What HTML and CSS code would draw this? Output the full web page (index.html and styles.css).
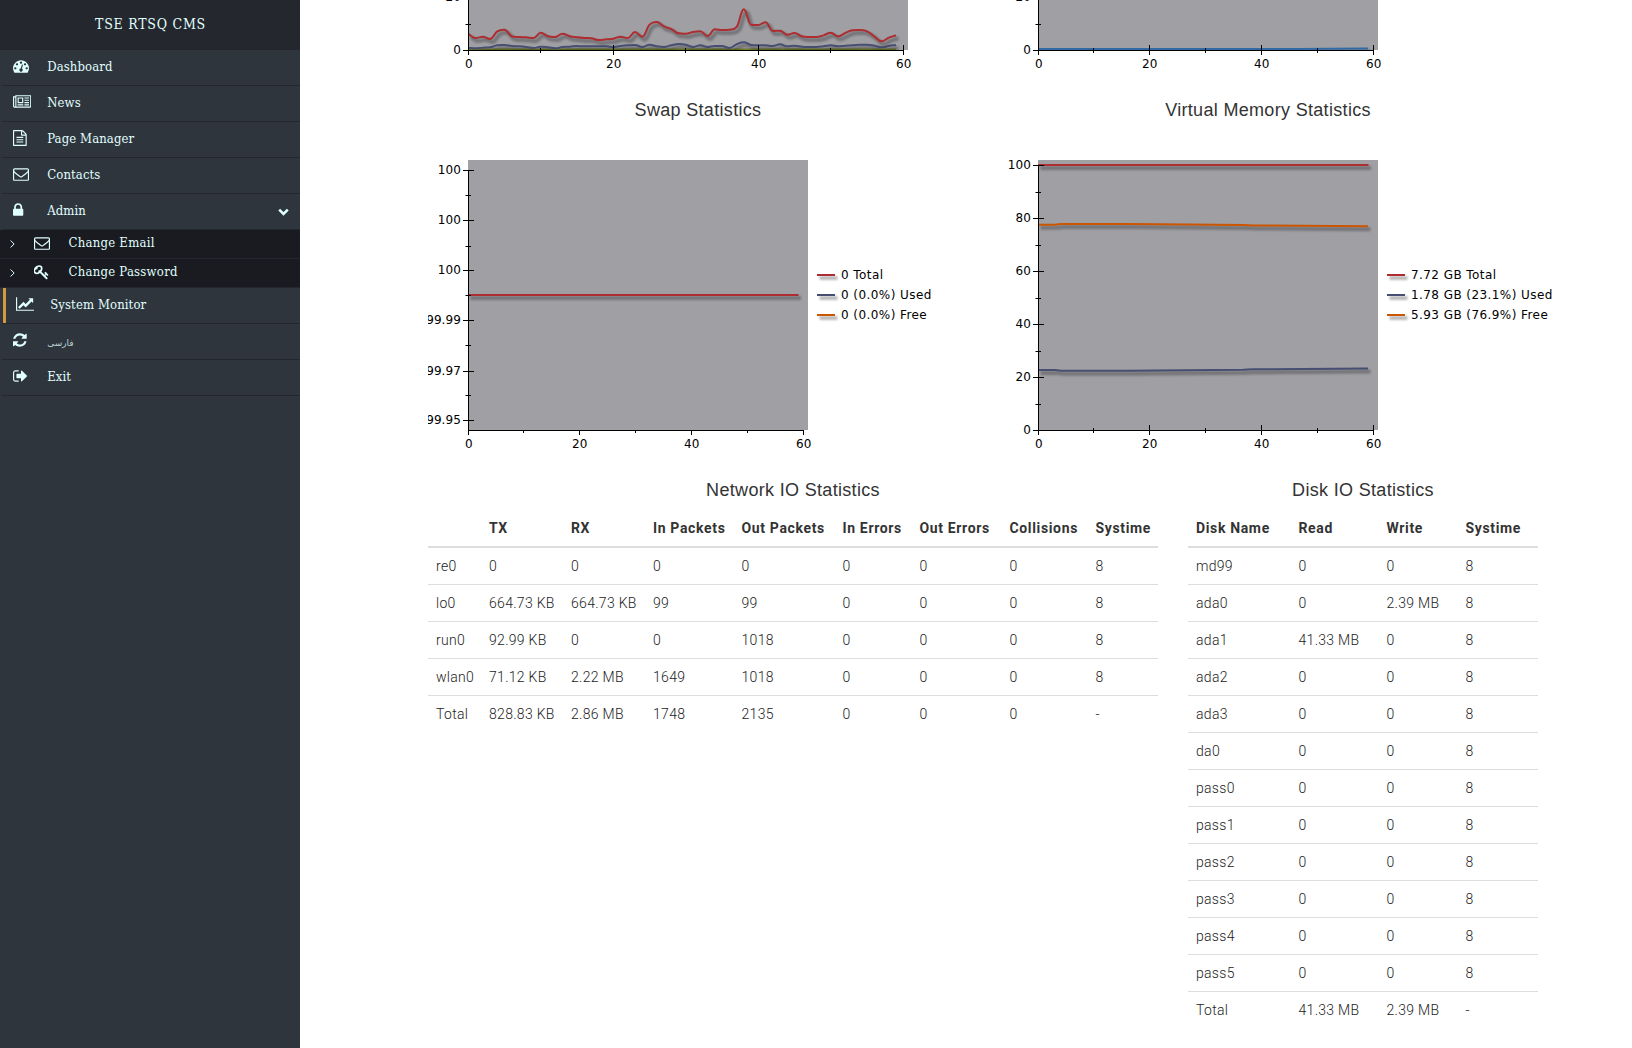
FILE: index.html
```html
<!DOCTYPE html>
<html lang="en">
<head>
<meta charset="utf-8">
<title>TSE RTSQ CMS</title>
<link rel="stylesheet" href="styles.css">
</head>
<body>
<div class="layout">
  <nav class="sidebar">
    <div class="brand">TSE RTSQ CMS</div>
    <ul class="menu">
      <li><a class="item"><svg class="icon" viewBox="0 0 1792 1792"><path d="M384 1152q0-53-37.500-90.500t-90.500-37.500-90.500 37.500-37.500 90.500 37.500 90.500 90.500 37.500 90.500-37.500 37.500-90.500zm192-448q0-53-37.500-90.500t-90.500-37.500-90.500 37.500-37.500 90.500 37.500 90.500 90.500 37.500 90.500-37.500 37.500-90.500zm428 481l101-382q6-26-7.500-48.500t-38.500-29.500-48 6.500-30 39.500l-101 382q-60 5-107 43.500t-63 98.500q-20 77 20 146t117 89 146-20 89-117q16-60-6-117t-72-91zm660-33q0-53-37.500-90.500t-90.500-37.500-90.500 37.500-37.500 90.500 37.500 90.500 90.500 37.500 90.500-37.500 37.500-90.500zm-640-640q0-53-37.500-90.500t-90.500-37.500-90.500 37.500-37.500 90.500 37.500 90.500 90.500 37.500 90.500-37.500 37.500-90.500zm448 192q0-53-37.500-90.500t-90.500-37.500-90.500 37.500-37.500 90.500 37.500 90.500 90.500 37.500 90.500-37.500 37.500-90.500zm320 448q0 261-141 483-19 29-54 29h-1402q-35 0-54-29-141-221-141-483 0-182 71-348t191-286 286-191 348-71 348 71 286 191 191 286 71 348z"/></svg><span>Dashboard</span></a></li>
      <li><a class="item"><svg class="icon wide" viewBox="0 0 2048 1792"><path d="M1024 512h-384v384h384v-384zm128 640v128h-640v-128h640zm0-768v640h-640v-640h640zm640 768v128h-512v-128h512zm0-256v128h-512v-128h512zm0-256v128h-512v-128h512zm0-256v128h-512v-128h512zm-1536 960v-960h-128v960q0 26 19 45t45 19 45-19 19-45zm1664 0v-1088h-1536v1088q0 33-11 64h1483q26 0 45-19t19-45zm128-1216v1216q0 80-56 136t-136 56h-1664q-80 0-136-56t-56-136v-1088h256v-128h1792z"/></svg><span>News</span></a></li>
      <li><a class="item"><svg class="icon" viewBox="128 0 1792 1792"><path d="M1596 380q28 28 48 76t20 88v1152q0 40-28 68t-68 28h-1344q-40 0-68-28t-28-68v-1600q0-40 28-68t68-28h896q40 0 88 20t76 48zm-444-244v376h376q-10-29-22-41l-313-313q-12-12-41-22zm384 1528v-1024h-416q-40 0-68-28t-28-68v-416h-768v1536h1280zm-1024-864q0-14 9-23t23-9h704q14 0 23 9t9 23v64q0 14-9 23t-23 9h-704q-14 0-23-9t-9-23v-64zm736 224q14 0 23 9t9 23v64q0 14-9 23t-23 9h-704q-14 0-23-9t-9-23v-64q0-14 9-23t23-9h704zm0 256q14 0 23 9t9 23v64q0 14-9 23t-23 9h-704q-14 0-23-9t-9-23v-64q0-14 9-23t23-9h704z"/></svg><span>Page Manager</span></a></li>
      <li><a class="item"><svg class="icon" viewBox="0 0 1792 1792"><path id="envelope" d="M1664 1504v-768q-32 36-69 66-268 206-426 338-51 43-83 67t-86.500 48.500-102.500 24.500h-2q-48 0-102.500-24.500t-86.500-48.500-83-67q-158-132-426-338-37-30-69-66v768q0 13 9.500 22.500t22.500 9.500h1472q13 0 22.500-9.500t9.500-22.500zm0-1051v-24.500l-.5-13-3-12.500-5.500-9-9-7.500-14-2.500h-1472q-13 0-22.500 9.500t-9.500 22.500q0 168 147 284 193 152 401 317 6 5 35 29.500t46 37.500 44.500 31.500 50.500 27.500 43 9h2q20 0 43-9t50.500-27.500 44.500-31.500 46-37.500 35-29.500q208-165 401-317 54-43 100.500-115.500t46.500-131.500zm128-37v1088q0 66-47 113t-113 47h-1472q-66 0-113-47t-47-113v-1088q0-66 47-113t113-47h1472q66 0 113 47t47 113z"/></svg><span>Contacts</span></a></li>
      <li><a class="item"><svg class="icon" viewBox="320 0 1792 1792"><path d="M640 768h512v-192q0-106-75-181t-181-75-181 75-75 181v192zm832 96v576q0 40-28 68t-68 28h-960q-40 0-68-28t-28-68v-576q0-40 28-68t68-28h32v-192q0-184 132-316t316-132 316 132 132 316v192h32q40 0 68 28t28 68z"/></svg><span>Admin</span><svg class="caret" viewBox="0 0 11 8"><path d="M1.2 1.6 5.5 5.9 9.8 1.6"/></svg></a></li>
    </ul>
    <ul class="submenu">
      <li><a class="subitem"><svg class="angle" viewBox="0 0 5 8"><path d="M.6.5 4.1 4 .6 7.5"/></svg><svg class="icon" viewBox="0 0 1792 1792"><use href="#envelope"/></svg><span>Change Email</span></a></li>
      <li><a class="subitem"><svg class="angle" viewBox="0 0 5 8"><path d="M.6.5 4.1 4 .6 7.5"/></svg><svg class="icon" viewBox="64 0 1792 1792"><path d="M832 512q0-80-56-136t-136-56-136 56-56 136q0 42 19 83-41-19-83-19-80 0-136 56t-56 136 56 136 136 56 136-56 56-136q0-42-19-83 41 19 83 19 80 0 136-56t56-136zm851 704q0 17-49 66t-66 49q-9 0-28.500-16t-36.500-33-38.500-40-24.500-26l-96 96 220 220q28 28 28 68 0 42-39 81t-81 39q-40 0-68-28l-671-671q-176 131-365 131-163 0-265.500-102.500t-102.500-265.500q0-160 95-313t248-248 313-95q163 0 265.500 102.500t102.500 265.500q0 189-131 365l355 355 96-96q-3-3-26-24.500t-40-38.500-33-36.500-16-28.500q0-17 49-66t66-49q13 0 23 10 6 6 46 44.500t82 79.500 86.500 86 73 78 28.500 41z"/></svg><span>Change Password</span></a></li>
    </ul>
    <ul class="menu">
      <li><a class="item active"><svg class="icon wide" viewBox="0 0 2048 1792"><path d="M2048 1536v128h-2048v-1536h128v1408h1920zm-128-1248v435q0 21-19.500 29.500t-35.500-7.500l-121-121-633 633q-10 10-23 10t-23-10l-233-233-416 416-192-192 585-585q10-10 23-10t23 10l233 233 464-464-121-121q-16-16-7.500-35.500t29.500-19.500h435q14 0 23 9t9 23z"/></svg><span>System Monitor</span></a></li>
      <li><a class="item"><svg class="icon" viewBox="128 0 1792 1792"><path d="M1639 1056q0 5-1 7-64 268-268 434.500t-478 166.500q-146 0-282.500-55t-243.500-157l-129 129q-19 19-45 19t-45-19-19-45v-448q0-26 19-45t45-19h448q26 0 45 19t19 45-19 45l-137 137q71 66 161 102t187 36q134 0 250-65t186-179q11-17 53-117 8-23 30-23h192q13 0 22.500 9.500t9.500 22.500zm25-800v448q0 26-19 45t-45 19h-448q-26 0-45-19t-19-45 19-45l138-138q-148-137-349-137-134 0-250 65t-186 179q-11 17-53 117-8 23-30 23h-199q-13 0-22.500-9.500t-9.500-22.500v-7q65-268 270-434.500t480-166.500q146 0 284 55.500t245 156.500l130-129q19-19 45-19t45 19 19 45z"/></svg><span class="persian" lang="fa">فارسی</span></a></li>
      <li><a class="item"><svg class="icon" viewBox="64 0 1792 1792"><path d="M704 1440q0 4 1 20t.5 26.500-3 23.500-10 19.500-20.500 6.500h-320q-119 0-203.500-84.500t-84.500-203.500v-704q0-119 84.500-203.500t203.500-84.500h320q13 0 22.500 9.500t9.500 22.500q0 4 1 20t.5 26.500-3 23.500-10 19.500-20.500 6.500h-320q-66 0-113 47t-47 113v704q0 66 47 113t113 47h312l11.500 1 11.500 3 8 5.500 7 9 2 13.500zm928-544q0 26-19 45l-544 544q-19 19-45 19t-45-19-19-45v-288h-448q-26 0-45-19t-19-45v-384q0-26 19-45t45-19h448v-288q0-26 19-45t45-19 45 19l544 544q19 19 19 45z"/></svg><span>Exit</span></a></li>
    </ul>
  </nav>

  <main class="content">
    <div class="charts">
      <svg class="chart top" id="cpu" width="540" height="80"></svg>
      <svg class="chart top" id="load" width="540" height="80"></svg>
    </div>
    <div class="charts">
      <section>
        <h4>Swap Statistics</h4>
        <svg class="chart" id="swap" width="540" height="310"></svg>
      </section>
      <section>
        <h4>Virtual Memory Statistics</h4>
        <svg class="chart" id="memory" width="540" height="310"></svg>
      </section>
    </div>
    <div class="tables">
      <section class="network">
        <h4>Network IO Statistics</h4>
        <table>
          <colgroup><col class="n1"><col class="n2"><col class="n3"><col class="n4"><col class="n5"><col class="n6"><col class="n7"><col class="n8"><col></colgroup>
          <thead><tr><th></th><th>TX</th><th>RX</th><th>In Packets</th><th>Out Packets</th><th>In Errors</th><th>Out Errors</th><th>Collisions</th><th>Systime</th></tr></thead>
          <tbody>
            <tr><td>re0</td><td>0</td><td>0</td><td>0</td><td>0</td><td>0</td><td>0</td><td>0</td><td>8</td></tr>
            <tr><td>lo0</td><td>664.73 KB</td><td>664.73 KB</td><td>99</td><td>99</td><td>0</td><td>0</td><td>0</td><td>8</td></tr>
            <tr><td>run0</td><td>92.99 KB</td><td>0</td><td>0</td><td>1018</td><td>0</td><td>0</td><td>0</td><td>8</td></tr>
            <tr><td>wlan0</td><td>71.12 KB</td><td>2.22 MB</td><td>1649</td><td>1018</td><td>0</td><td>0</td><td>0</td><td>8</td></tr>
            <tr><td>Total</td><td>828.83 KB</td><td>2.86 MB</td><td>1748</td><td>2135</td><td>0</td><td>0</td><td>0</td><td>-</td></tr>
          </tbody>
        </table>
      </section>
      <section class="disk">
        <h4>Disk IO Statistics</h4>
        <table>
          <colgroup><col class="d1"><col class="d2"><col class="d3"><col></colgroup>
          <thead><tr><th>Disk Name</th><th>Read</th><th>Write</th><th>Systime</th></tr></thead>
          <tbody>
            <tr><td>md99</td><td>0</td><td>0</td><td>8</td></tr>
            <tr><td>ada0</td><td>0</td><td>2.39 MB</td><td>8</td></tr>
            <tr><td>ada1</td><td>41.33 MB</td><td>0</td><td>8</td></tr>
            <tr><td>ada2</td><td>0</td><td>0</td><td>8</td></tr>
            <tr><td>ada3</td><td>0</td><td>0</td><td>8</td></tr>
            <tr><td>da0</td><td>0</td><td>0</td><td>8</td></tr>
            <tr><td>pass0</td><td>0</td><td>0</td><td>8</td></tr>
            <tr><td>pass1</td><td>0</td><td>0</td><td>8</td></tr>
            <tr><td>pass2</td><td>0</td><td>0</td><td>8</td></tr>
            <tr><td>pass3</td><td>0</td><td>0</td><td>8</td></tr>
            <tr><td>pass4</td><td>0</td><td>0</td><td>8</td></tr>
            <tr><td>pass5</td><td>0</td><td>0</td><td>8</td></tr>
            <tr><td>Total</td><td>41.33 MB</td><td>2.39 MB</td><td>-</td></tr>
          </tbody>
        </table>
      </section>
    </div>
  </main>
</div>
<script src="charts.js"></script>
</body>
</html>
```
FILE: styles.css
```css
* { box-sizing: border-box; }

body {
  margin: 0;
  background: #fff;
  color: #333;
  font: 14px/20px Roboto, "Liberation Sans", sans-serif;
}

.layout {
  display: flex;
  height: 1048px;
  overflow: hidden;
}

/* Sidebar */
.sidebar {
  flex: none;
  width: 300px;
  background: #2f353d;
  color: #e0ffff;
  font: 13px/20px "DejaVu Serif Condensed", "DejaVu Serif", serif;
  letter-spacing: .1px;
}

.brand {
  height: 50px;
  padding-left: 1px;
  background: #24272e;
  font-size: 14px;
  line-height: 48px;
  letter-spacing: .75px;
  text-align: center;
}

.menu, .submenu {
  margin: 0;
  padding: 0;
  list-style: none;
}

.menu { padding-left: 2px; }
.menu li { border-bottom: 1px solid #23282e; }

.item {
  display: flex;
  height: 35px;
  padding: 0 11px;
}

.icon {
  flex: none;
  width: 16px;
  height: 16px;
  margin: 8px 18.2px 0 0;
  fill: currentColor;
}

.icon.wide {
  width: 18.3px;
  margin-right: 15.9px;
}

.item span { padding-top: 7px; }

.item.active {
  margin-left: 1px;
  padding-left: 10px;
  border-left: 3px solid #d19b3d;
}

.caret {
  width: 11px;
  height: 8px;
  margin: 14px 0 0 auto;
  fill: none;
  stroke: currentColor;
  stroke-width: 2.6;
}

.submenu { letter-spacing: .25px; }

.submenu li {
  background: #191b20;
  border-bottom: 1px solid #24282e;
}

.subitem {
  display: flex;
  height: 28px;
  padding-left: 9.5px;
}

.subitem .icon { margin: 5px 18.5px 0 19.5px; }
.subitem span { padding-top: 3px; }

.angle {
  width: 5px;
  height: 8px;
  margin-top: 10px;
  fill: none;
  stroke: currentColor;
}

.item .persian {
  padding-top: 9px;
  font-family: "DejaVu Sans", sans-serif;
  font-size: 9px;
  letter-spacing: 0;
  color: #b9d2d4;
}

/* Main area */
.content { padding-left: 128px; }

.charts, .tables {
  display: flex;
  gap: 30px;
}

h4 {
  margin: 0;
  font: 500 18px/20px "Liberation Sans", sans-serif;
  letter-spacing: .32px;
  text-align: center;
  height: 50px;
}

.charts h4 { padding-top: 20px; height: 70px; }

.chart {
  display: block;
  flex: none;
  overflow: visible;
  font: 12px "DejaVu Sans", sans-serif;
  letter-spacing: .1px;
}

.legend { letter-spacing: .43px; }

#swap { clip-path: inset(0 -40px 0 0); }

.tables h4 { padding-top: 20px; }

.network { width: 730px; }
.disk { width: 350px; }

table {
  width: 100%;
  table-layout: fixed;
  border-spacing: 0;
}

th, td {
  height: 37px;
  padding: 0 8px;
  text-align: left;
  white-space: nowrap;
  border-top: 1px solid #ddd;
}

td { font-weight: 300; letter-spacing: .3px; color: #1c1c1c; }
th { height: 38px; border-top: 0; border-bottom: 2px solid #ddd; font-weight: 700; letter-spacing: .65px; }
tbody tr:first-child td { height: 36px; border-top: 0; }

.n1 { width: 53px; }
.n2 { width: 82px; }
.n3 { width: 82px; }
.n4 { width: 88.5px; }
.n5 { width: 101px; }
.n6 { width: 77px; }
.n7 { width: 90px; }
.n8 { width: 86px; }
.d1 { width: 102.5px; }
.d2 { width: 88px; }
.d3 { width: 79px; }
```
FILE: charts.js
```js
const RED = '#ad2d30', NAVY = '#464f72', ORANGE = '#cc5500', BLUE = '#316aa5';
const PLOT_X = 40;

function el(parent, name, attrs, text) {
  const node = document.createElementNS('http://www.w3.org/2000/svg', name);
  for (const key in attrs) node.setAttribute(key, attrs[key]);
  if (text !== undefined) node.textContent = text;
  parent.appendChild(node);
  return node;
}

// Monotone cubic through equally spaced samples.
function smooth(xs, ys) {
  const n = xs.length, d = [], m = [];
  for (let i = 0; i < n - 1; i++) d.push((ys[i + 1] - ys[i]) / (xs[i + 1] - xs[i]));
  for (let i = 0; i < n; i++) {
    if (i === 0) m.push(d[0]);
    else if (i === n - 1) m.push(d[n - 2]);
    else if (d[i - 1] * d[i] <= 0) m.push(0);
    else {
      const limit = 3 * Math.min(Math.abs(d[i - 1]), Math.abs(d[i]));
      const mean = (d[i - 1] + d[i]) / 2;
      m.push(Math.sign(mean) * Math.min(Math.abs(mean), limit));
    }
  }
  let path = `M${xs[0]} ${ys[0]}`;
  for (let i = 0; i < n - 1; i++) {
    const h = (xs[i + 1] - xs[i]) / 2.4;
    path += `C${xs[i] + h} ${ys[i] + m[i] * h} ${xs[i + 1] - h} ${ys[i + 1] - m[i + 1] * h} ${xs[i + 1]} ${ys[i + 1]}`;
  }
  return path;
}

function stroke(svg, d, color) {
  el(svg, 'path', { d, fill: 'none', stroke: '#000', 'stroke-width': 4, opacity: .27,
    transform: 'translate(2.5 3)', style: 'filter:blur(1px)' });
  el(svg, 'path', { d, fill: 'none', stroke: color, 'stroke-width': 2 });
}

function draw(id, o) {
  const svg = document.getElementById(id);
  el(svg, 'rect', { x: PLOT_X, y: o.top, width: o.width, height: o.base - o.top, fill: '#a09fa4' });
  const plot = el(svg, 'g', { style: `clip-path:polygon(${PLOT_X}px -30px,600px -30px,600px ${o.base}px,${PLOT_X}px ${o.base}px)`, 'clip-path': 'none' });
  plot.removeAttribute('style');
  const clip = el(svg, 'clipPath', { id: `${id}-plot` });
  el(clip, 'rect', { x: PLOT_X, y: o.top, width: o.width, height: o.base - o.top });
  plot.setAttribute('clip-path', `url(#${id}-plot)`);
  o.lines.forEach(([d, color]) => stroke(plot, d, color));

  const axis = [`M40.5 ${o.axisTop}V${o.base + .5}`, `M40 ${o.base + .5}H${o.xMajor[3] + 1}`];
  o.yMajor.forEach(([y]) => axis.push(`M35 ${y + .5}H${o.yInner}`));
  o.yMinor.forEach(y => axis.push(`M37.5 ${y + .5}H${o.yInnerMinor}`));
  o.xMajor.forEach((x, i) => axis.push(`M${x + .5} ${o.base - (o.cross && i ? 5 : 0)}V${o.base + 5}`));
  o.xMinor.forEach(x => axis.push(`M${x + .5} ${o.base - (o.cross ? 2 : 0)}V${o.base + 3}`));
  el(svg, 'path', { d: axis.join(''), stroke: '#000', fill: 'none' });

  o.yMajor.forEach(([y, label]) => el(svg, 'text', { x: 33, y: y + 4, 'text-anchor': 'end' }, label));
  o.xMajor.forEach((x, i) => el(svg, 'text', { x: x + .8, y: o.base + 18, 'text-anchor': 'middle' }, i * 20));
  (o.legend || []).forEach(([label, color], i) => {
    const y = o.legendY + i * 20;
    stroke(svg, `M${o.width + 49} ${y}H${o.width + 67}`, color);
    el(svg, 'text', { class: 'legend', x: o.width + 73, y: y + 4 }, label);
  });
}

const wideX = Array.from({ length: 60 }, (_, i) => 40.3 + i * 7.25);
const user = [102,114,110,117,94,89,109,111,112,114,98,109,111,101,109,112,114,115,120,118,116,110,114,96,110,74,66,79,87,100,101,96,94,108,88,90,89,81,28,74,75,67,93,92,104,99,109,111,111,106,98,109,99,91,90,94,109,124,113,106].map(v => v / 3);
const sys = [143,145,143,142,136,135,138,139,141,144,140,142,145,141,140,138,139,139,139,139,141,138,136,135,141,134,139,141,136,132,134,141,136,141,138,138,144,133,127,135,136,136,138,133,139,137,140,141,141,139,136,139,137,136,134,134,137,142,138,135].map(v => v / 3);

draw('cpu', {
  top: -20, base: 50, width: 440, axisTop: -20, cross: true, yInner: 41, yInnerMinor: 43,
  yMajor: [[50, '0'], [-3, '20']], yMinor: [24],
  xMajor: [40, 185, 330, 475], xMinor: [112, 257, 402],
  lines: [['M40 49.5H468', '#75802a'], [smooth(wideX, sys), NAVY], [smooth(wideX, user), RED]]
});

const narrow = { width: 340, xMajor: [40, 151, 263, 375], xMinor: [95, 207, 319] };

draw('load', {
  ...narrow, top: -20, base: 50, axisTop: -20, cross: true, yInner: 41, yInnerMinor: 43,
  yMajor: [[50, '0'], [-3, '20']], yMinor: [24],
  lines: [['M40 49H300L370 48.5', BLUE]]
});

draw('swap', {
  ...narrow, top: 10, base: 280, axisTop: 20, yInner: 46, yInnerMinor: 43,
  yMajor: [[20, '100'], [70, '100'], [120, '100'], [170, '99.99'], [221, '99.97'], [270, '99.95']],
  yMinor: [45, 96, 145, 195, 245],
  lines: [['M40 145H370.500', RED]],
  legendY: 125, legend: [['0 Total', RED], ['0 (0.0%) Used', NAVY], ['0 (0.0%) Free', ORANGE]]
});

draw('memory', {
  ...narrow, top: 10, base: 280, axisTop: 15, cross: true, yInner: 46, yInnerMinor: 43,
  yMajor: [[15, '100'], [68, '80'], [121, '60'], [174, '40'], [227, '20'], [280, '0']],
  yMinor: [42, 95, 148, 201, 254],
  lines: [
    ['M40 15H370.500', RED],
    ['M40 220H57L63 220.800H130L245 219.700L255 219.300L370 218.500', NAVY],
    ['M40 74.800H57L63 74.100H130L245 75L255 75.400L370 76.300', ORANGE]
  ],
  legendY: 125, legend: [['7.72 GB Total', RED], ['1.78 GB (23.1%) Used', NAVY], ['5.93 GB (76.9%) Free', ORANGE]]
});
```
